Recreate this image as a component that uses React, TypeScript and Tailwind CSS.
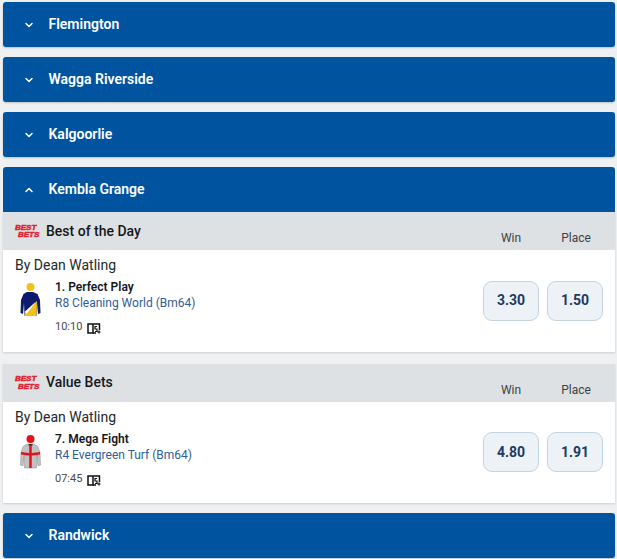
import React from 'react'
import { LuChevronDown, LuChevronUp } from 'react-icons/lu'

type Tip = {
    title: string
    runner: string
    race: string
    time: string
    win: string
    place: string
    silk: 'navy' | 'grey'
}

const VenueBar = ({ name, open = false }: { name: string; open?: boolean }) => (
    <div
        className={`flex h-[45px] items-center bg-[#00539f] pl-[20px] text-white ${
            open ? 'rounded-t-[3px]' : 'rounded-[3px] shadow-[0_1px_2px_rgba(0,0,0,0.2)]'
        }`}
    >
        {open ? (
            <LuChevronUp className="w-[12px] h-[12px] mr-[13.5px] stroke-[3px]" />
        ) : (
            <LuChevronDown className="w-[12px] h-[12px] mr-[13.5px] stroke-[3px]" />
        )}
        <span className="text-[14px] font-semibold">{name}</span>
    </div>
)

const BestBetsLogo = () => (
    <span className="flex w-[23px] flex-col text-[8px] leading-[7.500px] font-black italic text-[#e0202e] [-webkit-text-stroke:0.5px_#e0202e] font-['Liberation_Sans',sans-serif]">
        <span>BEST</span>
        <span className="pl-[3px]">BETS</span>
    </span>
)

// body with hanging sleeves, only a thin gap between them
const silkBody = 'M7 9h6l4.500 2 2.500 6 .5 13-2.500 1-1-11-.5 13H4.500L4 20 3 31l-2.500-1L1 17l2.500-6z'

const Silk = ({ kind }: { kind: Tip['silk'] }) =>
    kind === 'navy' ? (
        <svg width="21" height="34" viewBox="0 0 21 34">
            <circle cx="10.500" cy="4" r="4" fill="#f2c21a" />
            <path d={silkBody} fill="#0d1b6e" />
            <path d="M4.500 33l.5-4 12-11-.5 15z" fill="#f2c21a" />
            <path d="M4.500 29l11.500-10.500L7 30.500z" fill="#fff" />
        </svg>
    ) : (
        <svg width="21" height="34" viewBox="0 0 21 34">
            <circle cx="10.500" cy="4" r="4" fill="#e2121a" />
            <path d={silkBody} fill="#c2c2c2" stroke="#8a8a8a" strokeWidth="0.500" />
            <path d="M9.250 9h2.500v24h-2.500z" fill="#e2121a" />
            <path d="M1 17l8 1h3l8-1v2.500l-8 1H9l-8-1z" fill="#e2121a" />
            <path d="M8.500 9h4v1.500h-4z" fill="#333" />
        </svg>
    )

const FormIcon = () => (
    <svg width="14" height="12" viewBox="0 0 14 12" fill="none" stroke="#111" strokeWidth="1.500">
        <path d="M1 2h5v9H1zM6 2h6.500v6" />
        <path d="M6 11h3" />
        <path d="M10 4.500H8V7h2v2.500H8M10.500 10h3M12 8.500v3" strokeWidth="1.200" />
    </svg>
)

const Price = ({ value }: { value: string }) => (
    <button className="h-[40px] w-[56px] rounded-[9px] border border-[#c3d3e0] bg-[#edf2f7] text-[14px] font-bold text-[#1c3a63]">
        {value}
    </button>
)

const TipCard = ({ tip }: { tip: Tip }) => (
    <div className="shadow-[0_1px_2px_rgba(0,0,0,0.15)]">
        <div className="flex h-[38px] items-center bg-[#dee1e4] pl-[12px]">
            <BestBetsLogo />
            <span className="ml-[8px] text-[14px] font-medium text-[#15171a]">{tip.title}</span>
            <div className="ml-auto mt-[14px] flex text-[12px] text-[#3d4044]">
                <span className="w-[64px] text-center pr-[8px]">Win</span>
                <span className="w-[64px] text-center pr-[6px] mr-[4px]">Place</span>
            </div>
        </div>
        <div className="flex h-[101.5px] items-start justify-between bg-white pl-[12px] pr-[12px]">
            <div>
                <p className="mt-[7px] text-[14px] leading-[16px] text-[#24272b]">By Dean Watling</p>
                <div className="flex">
                    <div className="mt-[10px] ml-[5px] mr-[14px] w-[21px]">
                        <Silk kind={tip.silk} />
                    </div>
                    <div className="mt-[6px]">
                        <p className="text-[12px] leading-[16px] font-semibold text-[#15171a]">{tip.runner}</p>
                        <p className="text-[12px] leading-[16px] text-[#2f5d94]">{tip.race}</p>
                        <div className="mt-[8px] flex items-center text-[11px] leading-[16px] text-[#4a4a4a]">
                            {tip.time}
                            <span className="ml-[5px] mt-[2px]">
                                <FormIcon />
                            </span>
                        </div>
                    </div>
                </div>
            </div>
            <div className="mt-[30.5px] flex gap-[8px]">
                <Price value={tip.win} />
                <Price value={tip.place} />
            </div>
        </div>
    </div>
)

const tips: Tip[] = [
    {
        title: 'Best of the Day',
        runner: '1. Perfect Play',
        race: 'R8 Cleaning World (Bm64)',
        time: '10:10',
        win: '3.30',
        place: '1.50',
        silk: 'navy',
    },
    {
        title: 'Value Bets',
        runner: '7. Mega Fight',
        race: 'R4 Evergreen Turf (Bm64)',
        time: '07:45',
        win: '4.80',
        place: '1.91',
        silk: 'grey',
    },
]

export default function App() {
    return (
        <div className="h-[559px] w-[617px] overflow-hidden bg-[#eef0f2] pl-[3px] pr-[2px] pt-[2px] font-['Roboto',sans-serif]">
            <div className="flex flex-col gap-[10px]">
                <VenueBar name="Flemington" />
                <VenueBar name="Wagga Riverside" />
                <VenueBar name="Kalgoorlie" />
                <div>
                    <VenueBar name="Kembla Grange" open />
                    <div className="flex flex-col gap-[12px]">
                        {tips.map((tip) => (
                            <TipCard key={tip.title} tip={tip} />
                        ))}
                    </div>
                </div>
                <VenueBar name="Randwick" />
            </div>
        </div>
    )
}
